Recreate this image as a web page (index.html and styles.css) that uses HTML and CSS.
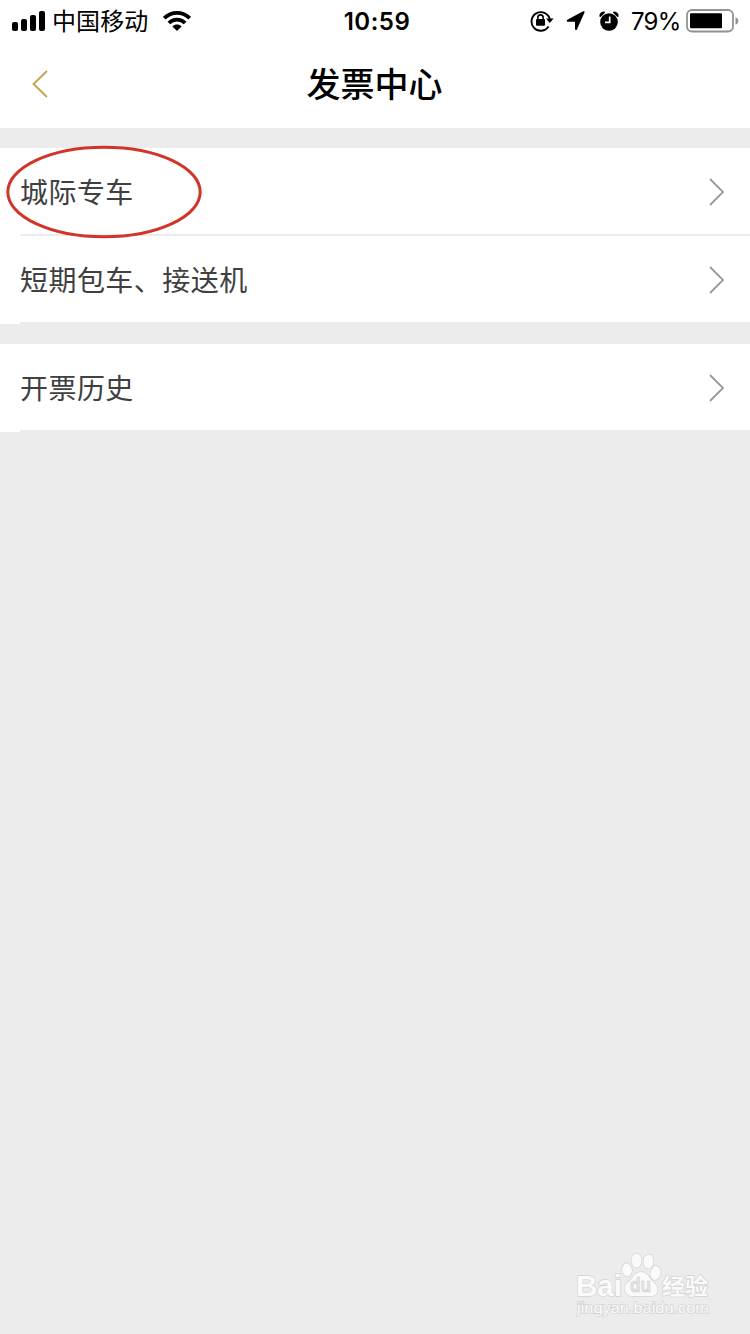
FILE: index.html
```html
<!DOCTYPE html>
<html lang="zh-CN">
<head>
<meta charset="utf-8">
<title>发票中心</title>
<link rel="stylesheet" href="styles.css">
</head>
<body>
<div class="screen">
  <header class="top">
    <div class="status">
      <div class="status-left">
        <svg class="signal" width="34" height="20" viewBox="0 0 34 20"><rect x="0" y="11" width="6" height="9" rx="2"/><rect x="9" y="8" width="6" height="12" rx="2"/><rect x="18" y="4" width="6" height="16" rx="2"/><rect x="27" y="0" width="6" height="20" rx="2"/></svg>
        <span class="carrier">中国移动</span>
        <svg class="wifi" width="28" height="20" viewBox="0 0 28 20"><g fill="none" stroke="#000" stroke-width="3.8"><path d="M1.3 7.2C8.3 .2 19.7 .2 26.7 7.2"/><path d="M5.9 12C10.4 7.6 17.6 7.6 22.1 12"/></g><path d="M14 20l-4.6-4.6c2.6-2.4 6.6-2.4 9.2 0z"/></svg>
      </div>
      <time class="clock">10:59</time>
      <div class="status-right">
        <svg class="lock" width="24" height="22" viewBox="0 0 24 22"><path d="M18.6 16.6A9.3 9.3 0 1 1 19.8 9" fill="none" stroke="#000" stroke-width="1.9"/><path d="M16 8.6h7.6L19.8 13z"/><rect x="6" y="9" width="9" height="6.8" rx="1"/><path d="M7.8 9.5V7.600a2.700 2.700 0 0 1 5.400 0v1.900" fill="none" stroke="#000" stroke-width="1.6"/></svg>
        <svg class="arrow" width="20" height="20" viewBox="0 0 20 20"><path d="M17.6 1.2 1.800 9.700h8.200v8.300z" stroke="#000" stroke-width="2" stroke-linejoin="round"/></svg>
        <svg class="alarm" width="20" height="20" viewBox="0 0 20 20"><circle cx="10" cy="11" r="8.8"/><path d="M.3 5.400C.3 2.300 2.300.6 5.600.5L6 1.800 1.600 6zM19.700 5.400C19.700 2.300 17.700.6 14.400.5L14 1.800 18.400 6z"/><path d="M10.7 5.5V11.3H6" fill="none" stroke="#fff" stroke-width="1.7"/></svg>
        <span class="percent">79%</span>
        <svg class="battery" width="53" height="24" viewBox="0 0 53 24"><rect x="1" y="1" width="46" height="21.500" rx="5" fill="none" stroke="#929292" stroke-width="1.8"/><rect x="4" y="4.200" width="32" height="15" rx="1"/><path d="M49.500 8.200c3.700.8 3.700 6.600 0 7.400z" fill="#929292"/></svg>
      </div>
    </div>
    <div class="nav">
      <svg class="back" width="16" height="28" viewBox="0 0 16 28"><path d="M15 1 1.500 14 15 27"/></svg>
      <h1 class="title">发票中心</h1>
    </div>
  </header>
  <main>
    <ul class="group">
      <li class="row"><span class="label">城际专车</span><svg class="chevron" width="16" height="28" viewBox="0 0 16 28"><path d="M1 1 14 14 1 27"/></svg>
        <svg class="highlight" width="198" height="96" viewBox="0 0 198 96"><ellipse cx="99" cy="48" rx="96.2" ry="44.7"/></svg></li>
      <li class="row"><span class="label">短期包车、接送机</span><svg class="chevron" width="16" height="28" viewBox="0 0 16 28"><path d="M1 1 14 14 1 27"/></svg></li>
    </ul>
    <ul class="group">
      <li class="row"><span class="label">开票历史</span><svg class="chevron" width="16" height="28" viewBox="0 0 16 28"><path d="M1 1 14 14 1 27"/></svg></li>
    </ul>
  </main>
  <footer class="watermark">
    <svg width="150" height="72" viewBox="0 0 150 72">
      <g class="mark">
        <ellipse cx="56" cy="20" rx="4.800" ry="6.500" transform="rotate(-8 56 20)"/><ellipse cx="65.500" cy="10.500" rx="5" ry="7"/><ellipse cx="77.500" cy="11.500" rx="5" ry="7" transform="rotate(8 77.500 11.500)"/><ellipse cx="84.500" cy="23" rx="5" ry="7" transform="rotate(12 84.500 23)"/>
        <path d="M70 22c-5 0-7 4-10 7.500-4 4-7 6-6 10.500 1 5 5 6.500 9 6h15c5 .5 8-1 8.500-6 .5-4-3-6.500-6.500-10.500-3-3.500-5-7.500-10-7.500z"/>
        <text class="brand" x="5" y="45.500" textLength="46" lengthAdjust="spacingAndGlyphs">Bai</text>
        <text class="brand-cn" x="91" y="44" textLength="46" lengthAdjust="spacingAndGlyphs">经验</text>
        <text class="url" x="6" y="63" textLength="132" lengthAdjust="spacingAndGlyphs">jingyan.baidu.com</text>
      </g>
      <text class="du" x="59" y="42" textLength="21" lengthAdjust="spacingAndGlyphs">du</text>
    </svg>
  </footer>
</div>
</body>
</html>
```
FILE: styles.css
```css
* { box-sizing: border-box; }
body { margin: 0; background: #ececec; font-family: "Noto Sans CJK SC", sans-serif; }
.screen { height: 1334px; display: flex; flex-direction: column; background: #ececec; }
.top { height: 128px; background: #fff; }
.status { height: 40px; display: grid; grid-template-columns: 1fr auto 1fr; align-items: center; padding: 0 11px 0 12px; font-size: 24px; line-height: 40px; color: #000; }
.status-left, .status-right { display: flex; align-items: center; }
.status-right { justify-content: flex-end; }
.status svg { flex: none; }
.carrier { margin: -2px 0 0 6px; letter-spacing: .1px; }
.wifi { margin-left: 15px; }
.clock { font-family: Inter, sans-serif; font-weight: 600; font-size: 24px; letter-spacing: .5px; padding: 1px 0 0 3px; }
.arrow { margin-left: 12px; }
.alarm { margin-left: 13px; }
.percent { font-family: Inter, sans-serif; font-size: 24px; letter-spacing: -.8px; margin: 2px 0 0 12px; width: 50px; }
.battery { margin-left: 5px; }
.nav { height: 88px; display: grid; grid-template-columns: 1fr auto 1fr; align-items: center; padding: 0 32px; }
.back path { fill: none; stroke: #c6a04f; stroke-width: 1.8; }
.title { margin: -2px 0 0 -1px; font-size: 34px; line-height: 48px; font-weight: 500; color: #000; }
.group { list-style: none; margin: 20px 0 0; padding: 0; background: #fff; }
.row { position: relative; height: 88px; padding: 0 25px 0 20px; display: flex; align-items: center; justify-content: space-between; background: linear-gradient(#ececec, #ececec) 20px 86px / 100% 2px no-repeat; }
.label { margin-top: -2px; font-size: 28px; line-height: 42px; letter-spacing: .45px; font-weight: 400; color: #404040; }
.chevron path { fill: none; stroke: #999; stroke-width: 1.8; }
.highlight { position: absolute; left: 4.500px; top: -4.500px; }
.highlight ellipse { fill: none; stroke: #d13428; stroke-width: 3; }
.watermark { margin-top: auto; align-self: flex-end; margin-right: 29px; height: 84px; }
.mark { fill: #fafafa; stroke: #d4d4d4; stroke-width: 1.4; paint-order: stroke; }
.brand { font: 700 30px "Liberation Sans", sans-serif; }
.brand-cn { font: 700 22px "Noto Sans CJK SC", sans-serif; }
.url { font: 400 14px "Liberation Sans", sans-serif; }
.du { font: 700 20px "Liberation Sans", sans-serif; fill: #e4e4e4; stroke: #cfcfcf; stroke-width: .6; }
```
